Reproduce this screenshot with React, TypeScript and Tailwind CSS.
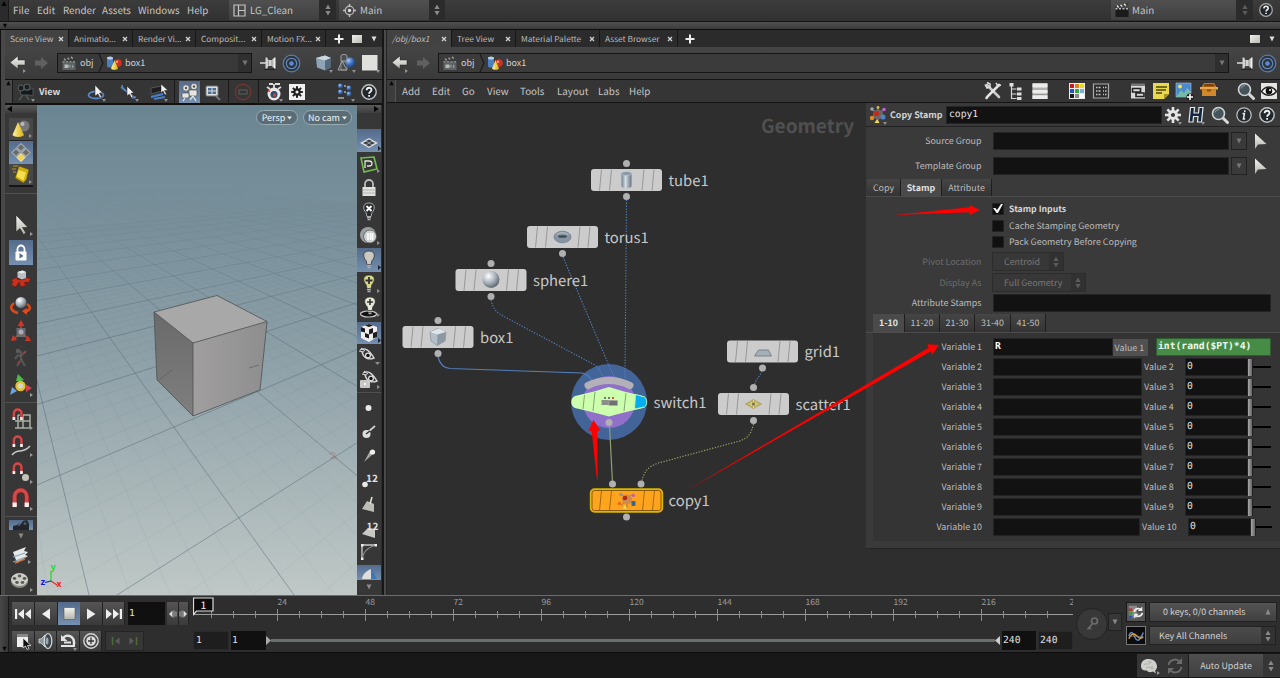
import React from "react";

type Kids = { children?: React.ReactNode };

function Ic({ c = "h-[20px] w-[20px]", v = "0 0 20 20", children }: { c?: string; v?: string } & Kids) {
  return (
    <svg className={"shrink-0 " + c} viewBox={v} fill="none">
      {children}
    </svg>
  );
}

const MONO = "font-['DejaVu_Sans_Mono',monospace] text-[9.700px]";

function Defs() {
  return (
    <svg className="absolute h-0 w-0">
      <defs>
        <linearGradient id="metal" x1="0" y1="0" x2="0" y2="1">
          <stop offset="0" stopColor="#f4f4f0" />
          <stop offset="1" stopColor="#b4b4ae" />
        </linearGradient>
        <radialGradient id="ball" cx="0.35" cy="0.3" r="0.8">
          <stop offset="0" stopColor="#ffffff" />
          <stop offset="0.5" stopColor="#a9b3bd" />
          <stop offset="1" stopColor="#4c555e" />
        </radialGradient>
        <radialGradient id="blueball" cx="0.35" cy="0.3" r="0.8">
          <stop offset="0" stopColor="#a9c8f2" />
          <stop offset="0.5" stopColor="#3e70b8" />
          <stop offset="1" stopColor="#1d3a70" />
        </radialGradient>
        <linearGradient id="tube" x1="0" y1="0" x2="1" y2="0">
          <stop offset="0" stopColor="#6f7d8a" />
          <stop offset="0.4" stopColor="#d4dde4" />
          <stop offset="1" stopColor="#66727e" />
        </linearGradient>
        <linearGradient id="gold" x1="0" y1="0" x2="1" y2="0">
          <stop offset="0" stopColor="#fff3a0" />
          <stop offset="1" stopColor="#d8b010" />
        </linearGradient>
      </defs>
    </svg>
  );
}

/* ---------- shared small icons ---------- */

const Tri = () => <path d="M15 17h4l-2 3z" fill="#8f8f8f" />;
const Side = () => <path d="M20 17v4l3-2z" fill="#8f8f8f" />;

const Back = ({ dim = false }: { dim?: boolean }) => (
  <Ic c="h-[20px] w-[18px]" v="0 0 18 20">
    {dim ? (
      <path d="M2 7.500h6V4l7 6-7 6v-3.500H2z" fill="#606060" />
    ) : (
      <>
        <path d="M16 7H9V3L1 9.500 9 16v-4h7z" fill="url(#metal)" stroke="#222" strokeWidth=".5" />
        <path d="M14 16v4l3-2z" fill="#8f8f8f" />
      </>
    )}
  </Ic>
);

const Clapper = ({ dark = false }: { dark?: boolean }) => (
  <Ic c="h-[16px] w-[16px]" v="0 0 16 16">
    <rect x="1.500" y="6.500" width="13" height="8.500" fill={dark ? "#1b1b1b" : "#5c6262"} />
    <path d="M0.500 4.200 14 .8l.6 2.200L1.200 6.300z" fill="#3a3a3a" />
    <path d="M3 3.600 4.600 5.400M6.500 2.700 8.200 4.500M10 1.900l1.800 1.700" stroke={dark ? "#ddd" : "#999"} strokeWidth="1.500" />
    <path d="M1.500 6.700h13" stroke={dark ? "#bbb" : "#888"} strokeWidth="1.400" strokeDasharray="2 1.500" />
    {!dark && (
      <>
        <rect x="3.500" y="9.500" width="4" height="3.500" fill="#b4baba" />
        <path d="m7.500 11 2-1.500v3.500zM11 9.500l2 2-2 2z" fill="#959b9b" />
      </>
    )}
  </Ic>
);

const Shapes = () => (
  <Ic c="h-[16px] w-[16px]" v="0 0 16 16">
    <path d="M1 3v8c0 2 6 2 6 0V3z" fill="#4b7fc0" />
    <ellipse cx="4" cy="3" rx="3" ry="1.500" fill="#b5d0ee" />
    <circle cx="12" cy="8" r="3.800" fill="#d03020" />
    <circle cx="11" cy="6.800" r="1.200" fill="#f09a8a" />
    <path d="M8.500 5 5 13.500c1 1.700 6 1.700 7 0z" fill="url(#gold)" />
  </Ic>
);

const Pin = () => (
  <Ic c="h-[18px] w-[18px]" v="0 0 18 18">
    <path d="M1 9h6" stroke="#ddd" strokeWidth="1.500" />
    <path d="M6.500 3.500h1.700l1 2.500H13l1-1.500h1.300V13.500H14L13 12H9.200l-1 2.500H6.500z" fill="#d2d2d2" />
    <path d="M15 3.500h1.500v11H15z" fill="#eee" />
    <path d="M9.500 6.500v5M13 6v6" stroke="#777" strokeWidth=".7" />
    <path d="M5 15.500h11" stroke="#222" />
  </Ic>
);

const Target = () => (
  <Ic c="h-[19px] w-[19px]" v="0 0 19 19">
    <circle cx="9.500" cy="9.500" r="8.300" stroke="#5d7ba8" strokeWidth="1.300" fill="#2b333d" />
    <circle cx="9.500" cy="9.500" r="5.200" stroke="#6484b2" strokeWidth="1.300" />
    <circle cx="9.500" cy="9.500" r="2.300" fill="#5a8ad8" />
  </Ic>
);

const Help = () => (
  <Ic>
    <circle cx="10" cy="10" r="7.200" fill="#20262b" stroke="#c2c6c6" strokeWidth="1.400" />
    <path d="M7.600 8.200c0-3.200 4.900-3.200 4.900-.3 0 1.900-2.400 1.800-2.400 3.800M10.100 13v1.700" stroke="#f2f2f2" strokeWidth="1.800" />
  </Ic>
);

const Info = () => (
  <Ic>
    <circle cx="10" cy="10" r="7.200" fill="#242a2e" stroke="#b8bcbc" strokeWidth="1.300" />
    <path d="M8.500 8.600h1.900l-1 5.400h1.800M10.800 5.300v1.700" stroke="#eee" strokeWidth="1.500" />
  </Ic>
);

const Mag = () => (
  <Ic>
    <path d="m12.500 12.500 5 5" stroke="#d8d8d8" strokeWidth="3" strokeLinecap="round" />
    <circle cx="8.500" cy="8.500" r="6" fill="#46545c" stroke="#d0d4d4" strokeWidth="1.600" />
    <path d="M5 7.500a4 4 0 0 1 4-3" stroke="#8fa0a8" />
  </Ic>
);

const Gear = ({ x = 10, y = 10, f = "#e4e4e4", hole = "#3a3a3a" }: { x?: number; y?: number; f?: string; hole?: string }) => (
  <g>
    {[0, 45, 90, 135].map((a) => (
      <rect key={a} x={x - 1.300} y={y - 8} width="2.600" height="16" fill={f} transform={`rotate(${a} ${x} ${y})`} />
    ))}
    <circle cx={x} cy={y} r="5" fill={f} />
    <circle cx={x} cy={y} r="2.100" fill={hole} />
  </g>
);

const Spin = ({ dim = false }: { dim?: boolean }) => (
  <Ic c="h-[14px] w-[8px]" v="0 0 8 14">
    <path d="M4 1.500 6.600 6H1.400zM4 12.500 6.600 8H1.400z" fill={dim ? "#5c5c5c" : "#8a8a8a"} />
  </Ic>
);

const Down = ({ f = "#8a8a8a" }: { f?: string }) => (
  <Ic c="h-[8px] w-[8px]" v="0 0 8 8">
    <path d="M1.500 1.500h5L4 6.500z" fill={f} />
  </Ic>
);

const Plus = () => (
  <Ic c="h-[10px] w-[10px]" v="0 0 10 10">
    <path d="M5 .5v9M.5 5h9" stroke="#eee" strokeWidth="2" />
  </Ic>
);

const Cross = () => (
  <Ic c="h-[6px] w-[6px]" v="0 0 6 6">
    <path d="m1 1 4 4M5 1 1 5" stroke="#d2d2d2" strokeWidth="1.300" />
  </Ic>
);

/* ---------- top bar ---------- */

function TopBar() {
  return (
    <div className="flex h-[22px] shrink-0 items-center border-b border-[#151515] bg-gradient-to-b from-[#3c3c3c] to-[#313131] pb-px text-[9.800px] leading-[20px] text-[#c6c6c6]">
      <div className="flex h-[21px] w-[9px] justify-center border-r border-[#1a1a1a] bg-[#2b2b2b] pt-px">
        <Ic c="h-[6px] w-[6px]" v="0 0 6 6"><path d="M3 0 5.500 5h-5z" fill="#050505" /></Ic>
      </div>
      <span className="ml-[4px] w-[24px]">File</span>
      <span className="w-[26px]">Edit</span>
      <span className="w-[39px]">Render</span>
      <span className="w-[36px]">Assets</span>
      <span className="w-[49px]">Windows</span>
      <span className="w-[42px]">Help</span>
      <div className="flex h-[20px] w-[90px] items-center bg-gradient-to-b from-[#505050] to-[#404040] pl-[4px]">
        <Ic c="h-[13px] w-[13px]" v="0 0 13 13">
          <path d="M1 1h11v11H1zM5.500 1v11M5.500 6.500H12" stroke="#c4c4c4" strokeWidth="1.200" />
        </Ic>
        <span className="ml-[4px]">LG_Clean</span>
      </div>
      <div className="flex h-[20px] w-[17px] items-center justify-center bg-[#2b2b2b]"><Spin /></div>
      <div className="ml-[3px] flex h-[20px] w-[90px] items-center bg-gradient-to-b from-[#505050] to-[#404040] pl-[4px]">
        <Ic c="h-[13px] w-[13px]" v="0 0 13 13">
          <circle cx="6.500" cy="6.500" r="4.300" stroke="#b4b4b4" strokeWidth="1.200" />
          <circle cx="6.500" cy="6.500" r="1.700" fill="#ddd" />
          <path d="M6.500 0v3M6.500 10v3M0 6.500h3M10 6.500h3" stroke="#c4c4c4" strokeWidth="1.400" />
        </Ic>
        <span className="ml-[4px]">Main</span>
      </div>
      <div className="flex h-[20px] w-[16px] items-center justify-center bg-[#2b2b2b]"><Spin /></div>
      <div className="ml-[666px] flex h-[20px] w-[125px] items-center bg-gradient-to-b from-[#505050] to-[#404040] pl-[3px]">
        <Clapper dark />
        <span className="ml-[2px]">Main</span>
      </div>
      <div className="flex h-[20px] w-[17px] items-center justify-center bg-[#2b2b2b]"><Spin dim /></div>
      <div className="ml-[4px] flex w-[18px] items-center justify-center">
        <Ic c="h-[14px] w-[14px]" v="2 2 16 16">
          <circle cx="10" cy="10" r="7.200" fill="#20262b" stroke="#a8abab" strokeWidth="1.400" />
          <path d="M7.600 8.200c0-3.200 4.900-3.200 4.900-.3 0 1.900-2.400 1.800-2.400 3.800M10.100 13v1.700" stroke="#eee" strokeWidth="1.900" />
        </Ic>
      </div>
    </div>
  );
}

/* ---------- pane tabs & path ---------- */

function Tab({ c, label, on = false }: { c: string; label: string; on?: boolean }) {
  return (
    <div
      className={
        "flex h-full shrink-0 items-center justify-between whitespace-nowrap border-r border-[#171717] pl-[5px] pr-[4px] " +
        (on ? "bg-[#424242] " : "bg-[#2b2b2b] ") +
        c
      }
    >
      <span>{label}</span>
      <Cross />
    </div>
  );
}

const Win = () => <div className="h-[8px] w-[10px] bg-gradient-to-br from-[#f0f0ec] to-[#bcbcb6]" />;

function PathContents() {
  return (
    <>
      <Clapper />
      <span className="ml-[3px] w-[18px]">obj</span>
      <Ic c="h-[18px] w-[6px]" v="0 0 6 18"><path d="M1 0l4 9-4 9" stroke="#1b1b1b" strokeWidth="1.200" /></Ic>
      <div className="ml-[2px] mr-[3px] flex"><Shapes /></div>
      <span>box1</span>
    </>
  );
}

/* ---------- scene view ---------- */

function Viewport() {
  const lines: React.ReactNode[] = [];
  const ax = 763, bx = -53, hy = 57, by = 490;
  const D = by - hy;
  for (let i = -60; i <= 10; i++) {
    const x = 80 + i * 68;
    const major = i % 5 === 0;
    const t = 3;
    lines.push(
      <path key={"a" + i} d={`M${ax} ${hy}L${ax + (x - ax) * t} ${hy + D * t}`} stroke="#566b78" strokeWidth={major ? 1 : 0.6} opacity={major ? 0.5 : 0.13} />
    );
  }
  for (let i = -4; i <= 90; i++) {
    const x = 52 + i * 41;
    const major = i % 5 === 0;
    lines.push(
      <path key={"b" + i} d={`M${bx} ${hy}L${bx + (x - bx) * 2} ${hy + D * 2}`} stroke="#566b78" strokeWidth={major ? 1 : 0.6} opacity={major ? 0.5 : 0.13} />
    );
  }
  return (
    <div className="relative h-full w-[320px] shrink-0 overflow-hidden bg-gradient-to-b from-[#6a8592] via-[#8c9fa7] to-[#bfc8c6]">
      <svg className="h-[490px] w-[320px]" viewBox="0 0 320 490" fill="none">
        <defs>
          <linearGradient id="fade" x1="0" y1="0" x2="0" y2="1">
            <stop offset="0.170" stopColor="#000" />
            <stop offset="0.450" stopColor="#fff" />
          </linearGradient>
          <mask id="fadeMask"><rect width="320" height="490" fill="url(#fade)" /></mask>
          <linearGradient id="faceL" x1="0" y1="0" x2="0" y2="1">
            <stop offset="0" stopColor="#6a6a6a" /><stop offset="1" stopColor="#7f7f7f" />
          </linearGradient>
          <linearGradient id="faceR" x1="0" y1="0" x2="1" y2="0">
            <stop offset="0" stopColor="#a09e9e" /><stop offset="1" stopColor="#8f8e8e" />
          </linearGradient>
        </defs>
        <g mask="url(#fadeMask)">{lines}</g>
        <path d="M117 207 180 190.500 230 216.500 156 238z" fill="#a9a8a8" />
        <path d="M117 207 156 238 156 311 120 275z" fill="url(#faceL)" />
        <path d="M156 238 230 216.500 223 285 156 311z" fill="url(#faceR)" />
        <path d="M117 207 180 190.500 230 216.500 223 285 156 311 120 275zM117 207l39 31 74-21.500M156 238v73" stroke="#4d5152" strokeWidth=".8" />
        <path d="M122 275l13-10M222 260l-10 3" stroke="#5d5d5d" strokeWidth=".7" />
        <path d="M292 350c2-3 7-3 6 0-1 2-3 2-4 3h6" stroke="#b06a66" strokeWidth="1" opacity=".6" />
        <path d="M14 476v-10" stroke="#18e018" strokeWidth="1.200" />
        <path d="m14 476 6 4" stroke="#f02020" strokeWidth="1.200" />
        <path d="m14 476-6 1.500" stroke="#1818e0" strokeWidth="1.200" />
        <text x="13.500" y="465" fontSize="9" fontWeight="700" fill="#12e012">y</text>
        <text x="19.500" y="481.500" fontSize="9" fontWeight="700" fill="#f01818">x</text>
        <text x="3.500" y="479.500" fontSize="9" fontWeight="700" fill="#1414e0">z</text>
      </svg>
      <div className="absolute right-[5px] top-[5px] flex gap-[5px] text-[9px] leading-[13px] text-[#eef2f2]">
        <div className="flex h-[15px] w-[42px] items-center justify-center rounded-full border border-[#9aaab1] bg-[#5a6d76]">Persp<span className="ml-[2px]"><Ic c="h-[4px] w-[5px]" v="0 0 5 4"><path d="M0 .5h5L2.500 3.500z" fill="#eee" /></Ic></span></div>
        <div className="flex h-[15px] w-[49px] items-center justify-center rounded-full border border-[#9aaab1] bg-[#5a6d76]">No cam<span className="ml-[2px]"><Ic c="h-[4px] w-[5px]" v="0 0 5 4"><path d="M0 .5h5L2.500 3.500z" fill="#eee" /></Ic></span></div>
      </div>
    </div>
  );
}

const SEL = "bg-gradient-to-b from-[#546b8c] to-[#7590b0]";

function Cell({ h, c = "", box = "", children }: { h: string; c?: string; box?: string } & Kids) {
  return (
    <div className={"flex w-full shrink-0 items-center justify-center " + h + " " + c}>
      <div className={"flex h-full w-[24px] items-center justify-center " + box}>
        <Ic c="h-[24px] w-[24px]" v="0 0 24 24">{children}</Ic>
      </div>
    </div>
  );
}

const Bulb = ({ f, s = "#333" }: { f: string; s?: string }) => (
  <>
    <path d="M12 3c-7 0-6 7-3 9.500l1 4h4l1-4C18 10 19 3 12 3z" fill={f} stroke={s} strokeWidth=".8" />
    <path d="M10 17.500h4M10.500 19.500h3" stroke="#b0b0b0" strokeWidth="1.400" />
  </>
);

const Magnet = ({ s = 1, x = 0, y = 0 }: { s?: number; x?: number; y?: number }) => (
  <g transform={`translate(${x} ${y}) scale(${s})`}>
    <path d="M5 20V9a6.500 6.500 0 0 1 13 0v11" stroke="#6b1d1d" strokeWidth="5.400" />
    <path d="M5 20V9a6.500 6.500 0 0 1 13 0v11" stroke="#cf4a4a" strokeWidth="4.200" />
    <path d="M5 20.500v-5M18 20.500v-5" stroke="#f2f2f2" strokeWidth="4.600" />
  </g>
);

const Sep = ({ c = "" }: { c?: string }) => <div className={"h-px w-full shrink-0 bg-[#505050] " + c} />;

function LeftTools() {
  return (
    <div className="flex w-[32px] shrink-0 flex-col overflow-hidden bg-[#373737]">
      <div className="flex h-[8px] w-full shrink-0 items-center bg-gradient-to-b from-[#5a5a5a] to-[#3e3e3e] pl-[2px]">
        <Ic c="h-[6px] w-[5px]" v="0 0 5 6"><path d="M5 0v6L0 3z" fill="#050505" /></Ic>
      </div>
      <Cell h="h-[23px]" c="mt-[5px]" box="bg-[#474747] border-b border-[#222]">
        <circle cx="15" cy="9" r="5.500" fill="#777" /><circle cx="13.500" cy="7" r="2" fill="#bbb" />
        <path d="M9 5 3.500 18c1.500 2.500 10 2.500 11.500 0z" fill="url(#gold)" /><Side />
      </Cell>
      <Cell h="h-[23px]" box={SEL}>
        <g stroke="#ccc" strokeWidth="1" fill="#6d6d68">
          <path d="m12 2.500 4 4-4 4-4-4z" /><path d="m7 7.500 4 4-4 4-4-4z" /><path d="m17 7.500 4 4-4 4-4-4z" />
          <path d="m12 12.500 4 4-4 4-4-4z" fill="#f4d24a" stroke="#fff6b8" />
        </g>
        <Side />
      </Cell>
      <Cell h="h-[23px]" box="bg-[#474747] border-b-2 border-[#151515]">
        <path d="M4 3h5M3 6h4M4 9h3" stroke="#a58a18" strokeWidth="2" opacity=".6" />
        <path d="M10 3l10 3.500-2.500 10-3 3.500-8.500-5z" fill="#cfae10" stroke="#5e4e08" strokeWidth=".6" />
        <path d="m9.500 7 7.500 2.500-2.500 8-7-4z" fill="#f5df50" /><Side />
      </Cell>
      <Sep c="mt-[6px]" />
      <Cell h="h-[26px]" c="mt-[18px]">
        <path d="M7 2v17l4-3.500 3.500 6 2.500-1.500-3.500-5.500H19z" fill="url(#metal)" stroke="#222" strokeWidth=".6" /><path d="M21 19v4l3-2z" fill="#999" />
      </Cell>
      <Cell h="h-[25px]" c="mt-[2px]" box={SEL}>
        <path d="M8.500 11V8a3.500 3.500 0 0 1 7 0v3" stroke="#fff" strokeWidth="1.800" />
        <rect x="6.500" y="10.500" width="11" height="9" rx=".8" fill="#fff" />
        <path d="M10.500 12v5.500l4-2.500z" fill="#4f6a90" />
      </Cell>
      <Cell h="h-[27px]">
        <path d="m2 13 6-3v2l4 1 4-1v-2l6 2-3 4-1-1-3 1 3 2-6 2-2-5-3 5-5-2 2-3z" fill="#c8301c" stroke="#5e140a" strokeWidth=".5" />
        <path d="m8.500 5 5-1.500L17 5v6l-4 1.500-4.500-2z" fill="#b9bfc4" /><path d="m8.500 5 4.500 1.500L17 5l-3.500-1.500z" fill="#e8ecee" />
      </Cell>
      <Cell h="h-[26px]">
        <path d="M5 10c-6 5-1 9 4 10M18 11c5 3 3 7-3 8" stroke="#d84a18" strokeWidth="2.600" /><path d="m18 15-5 3 5 4z" fill="#e04a20" />
        <circle cx="12" cy="9.500" r="5.500" fill="url(#ball)" />
      </Cell>
      <Cell h="h-[27px]">
        <path d="M12 12V5M12 13l-6 5M12 13l7 5" stroke="#c03020" strokeWidth="2" />
        <path d="M8.500 6 12 0l3.500 6zM2 21l2-6 4 5zM22 21l-6 0 3-5z" fill="#d43424" />
        <rect x="7.500" y="8" width="9" height="9" fill="#6d7478" opacity=".85" /><circle cx="12" cy="12" r="2.500" fill="#aab" />
      </Cell>
      <Cell h="h-[26px]">
        <path d="M12 5v9l-4 6M12 13l4 7M8 9l4 1 5-5M6 13l3-4" stroke="#555" strokeWidth="2.200" />
        <path d="m11 9 1 1M12 13l1 1M15 7l1-1M9 17l1-1" stroke="#a84444" strokeWidth="1.600" /><circle cx="9" cy="5" r="2.300" fill="#5b5b5b" />
      </Cell>
      <Cell h="h-[27px]">
        <circle cx="11.500" cy="13" r="4" fill="#d8d8c8" stroke="#e0c030" strokeWidth="2.400" />
        <path d="M7 8 9 1l6 6-3 1z" fill="#4fb846" /><path d="m16 11 7 4-6 4z" fill="#d84050" /><path d="m1 22 2-8 5 4z" fill="#6fa3dc" />
        <path d="M21 20v4l3-2z" fill="#999" />
      </Cell>
      <Sep c="mt-[4px]" />
      <Cell h="h-[27px]" c="mt-[2px]">
        <path d="M9 8h12v13H6M14 8v13M6 14h15M9 8v13" stroke="#a9b0a4" strokeWidth="1.500" /><Magnet s={0.58} x={2} y={1} /><path d="M21 19v4l3-2z" fill="#999" />
      </Cell>
      <Cell h="h-[27px]">
        <path d="M3 21c6-8 10 0 18-9" stroke="#c5c8c4" strokeWidth="1.500" /><Magnet s={0.58} x={2} y={1} /><path d="M21 19v4l3-2z" fill="#999" />
      </Cell>
      <Cell h="h-[27px]">
        <Magnet s={0.58} x={2} y={1} /><circle cx="16.500" cy="16.500" r="3.500" fill="#c4c4b8" /><path d="M21 19v4l3-2z" fill="#999" />
      </Cell>
      <Cell h="h-[27px]"><Magnet s={0.93} x={1} y={0} /><path d="M21 19v4l3-2z" fill="#999" /></Cell>
      <Sep c="mt-[3px]" />
      <Cell h="h-[10px]" c="mt-[3px] overflow-hidden" box={SEL}>
        <path d="M4 17v-4l8-2 2-3 4-1 2 4v6z" fill="#20262c" /><circle cx="10" cy="11.500" r="1.500" fill="#556" /><circle cx="16" cy="10.500" r="1.500" fill="#556" />
      </Cell>
      <div className="flex h-[12px] shrink-0 items-center justify-center"><Down /></div>
      <Cell h="h-[26px]">
        <path d="m4 9 13-5-2 4 4 1-3 3 3 1-11 7z" fill="#e8e8e4" /><path d="m4 14 12-4M4 19l13-5" stroke="#7da7c8" strokeWidth="1.200" />
        <path d="m6 20 10-4" stroke="#d0703a" strokeWidth="1.500" /><path d="M19 17v4l3-2z" fill="#999" />
      </Cell>
      <Cell h="h-[25px]">
        <ellipse cx="10.500" cy="12" rx="8.500" ry="7" fill="#85857e" /><ellipse cx="10.500" cy="10.500" rx="8.500" ry="6.500" fill="#cdcdc5" />
        <g fill="#5a5a56"><ellipse cx="10.500" cy="7" rx="1.800" ry="1.400" /><ellipse cx="5.500" cy="9.500" rx="1.800" ry="1.400" /><ellipse cx="15.500" cy="9.500" rx="1.800" ry="1.400" /><ellipse cx="8" cy="13.500" rx="1.800" ry="1.400" /><ellipse cx="13.500" cy="13.500" rx="1.800" ry="1.400" /></g>
        <path d="M21 19v4l3-2z" fill="#999" />
      </Cell>
    </div>
  );
}

function RightTools() {
  const eye = <><path d="M3 6c5-3 9 0 14 8-5 2-10 1-12-6" stroke="#d8d8d8" strokeWidth="1.400" /><path d="M4 4l4 3M2 7l5 1" stroke="#ddd" strokeWidth="1" /><circle cx="11" cy="11.500" r="3" fill="#ddd" /><circle cx="11" cy="11.500" r="1.700" fill="#111" /></>;
  return (
    <div className="flex w-[24px] shrink-0 flex-col overflow-hidden bg-[#373737]">
      <div className="flex h-[8px] w-full shrink-0 items-center justify-end bg-gradient-to-b from-[#5a5a5a] to-[#3e3e3e] pr-[2px]">
        <Ic c="h-[6px] w-[5px]" v="0 0 5 6"><path d="M0 0v6l5-3z" fill="#050505" /></Ic>
      </div>
      <Cell h="h-[23px]" c="mt-[16px]" box={SEL}>
        <path d="m3 14 9-5 9 5-9 5z" fill="#ddd" /><path d="m6 14 3-1.500 3 1.500-3 1.500zM12 14l3-1.500 3 1.500-3 1.500zM9 12l3-1.500 3 1.500-3 1.500zM9 16l3-1.500 3 1.500-3 1.500z" fill="#39424c" /><path d="M21 17v5l3-2.500z" fill="#222" />
      </Cell>
      <Cell h="h-[24px]">
        <path d="m4 6 13-1 3 12-13 3z" stroke="#6fc04a" strokeWidth="1.600" /><path d="M8 16V9h4c4 0 4 5 0 5H10" stroke="#dde8d8" strokeWidth="1.300" /><Side />
      </Cell>
      <Cell h="h-[24px]">
        <path d="M8 11V8a4 4 0 0 1 8 0v3" stroke="#bbb" strokeWidth="1.800" /><rect x="5.500" y="11" width="13" height="9" fill="#e2e2dc" /><path d="M5.500 14h13M5.500 17h13" stroke="#aaa" strokeWidth=".8" />
      </Cell>
      <Cell h="h-[24px]">
        <Bulb f="#272c2e" s="#c8c8c8" /><path d="m9.500 6 5 5M14.500 6l-5 5" stroke="#fff" strokeWidth="1.800" />
      </Cell>
      <Cell h="h-[24px]">
        <circle cx="11" cy="11" r="8" fill="#9aa0a0" /><circle cx="13" cy="12.500" r="6.500" fill="#cfd2d0" stroke="#555" strokeWidth=".8" /><path d="M11 9v7M13.500 9v7M15.500 9v7" stroke="#fff" strokeWidth="1.500" /><Side />
      </Cell>
      <Cell h="h-[24px]" box={SEL}><Bulb f="#c9c9c0" /><path d="M21 17v5l3-2.500z" fill="#222" /></Cell>
      <Cell h="h-[24px]"><Bulb f="#d9d98a" /><path d="M12 5v7M8.500 8.500h7" stroke="#333" strokeWidth="1.800" /><Side /></Cell>
      <Cell h="h-[24px]"><ellipse cx="11.500" cy="18" rx="8" ry="3" fill="#111" stroke="#ccc" strokeWidth="1.200" /><g transform="translate(1 -2)"><Bulb f="#e8ead8" /><path d="M12 5v6M9 8h6" stroke="#333" strokeWidth="1.600" /></g><Side /></Cell>
      <Cell h="h-[22px]" c="mt-[2px]" box={SEL}>
        <path d="m4 6 8-3 8 3v10l-8 5-8-4z" fill="#eee" /><path d="m8 4.500 4 1.500 4-1.500L12 3zM4 6l4 1.500v4l-4-1zM12 8.500 16 7v5l-4 1.500zM8 12l4 1.500v4L8 16zM16 12l4-1.500V16l-4 1.500z" fill="#1c1c1c" /><path d="M21 17v5l3-2.500z" fill="#222" />
      </Cell>
      <Cell h="h-[24px]">{eye}<path d="M18 18h5l-2.500 3z" fill="#8f8f8f" /></Cell>
      <Cell h="h-[24px]"><g transform="translate(3 -1)">{eye}</g><rect x="3" y="12" width="10" height="8" rx="1" fill="#c8c8c4" /><path d="M6.500 13.500v5l4-2.500z" fill="#fff" stroke="#888" strokeWidth=".4" /><Side /></Cell>
      <Sep />
      <Cell h="h-[24px]" c="mt-[3px]"><circle cx="11.500" cy="12" r="3" fill="#e8e8e4" /></Cell>
      <Cell h="h-[24px]"><path d="m11 12 7-6" stroke="#ccc" strokeWidth="1.800" /><circle cx="9.500" cy="14" r="4" fill="#ddd" /><path d="m9 14 4-3" stroke="#333" strokeWidth="1.500" /></Cell>
      <Cell h="h-[24px]"><path d="M7 18 13 7l3 3z" fill="#a8a8a4" /><circle cx="15.500" cy="8" r="2.600" fill="#f0f0ec" /></Cell>
      <Cell h="h-[24px]"><text x="9" y="14" fontSize="10" fontWeight="700" fill="#e2e2e2">12</text><circle cx="8" cy="16.500" r="2.800" fill="#e8e8e4" /></Cell>
      <Cell h="h-[24px]"><path d="m5 17 5-8 7 3 0 8z" fill="#bdbdb8" /><path d="M15 5l-2 7" stroke="#ddd" strokeWidth="1.600" /></Cell>
      <Cell h="h-[24px]"><path d="m5 18 6-6 7 1v9z" fill="#c8c8c4" /><text x="9.500" y="13.500" fontSize="10" fontWeight="700" fill="#e2e2e2">12</text></Cell>
      <Cell h="h-[24px]"><path d="M5 5h14M5 5v14" stroke="#ccc" strokeWidth="1.300" /><path d="M5 19C7 11 10 8 19 5" stroke="#888" strokeWidth="1.200" /><path d="M4 4h2.500v2.500H4zM17.500 4H20v2.500h-2.500zM4 17.500h2.500V20H4z" fill="#eee" /></Cell>
      <Cell h="h-[15px]" c="mt-px overflow-hidden" box={SEL}><path d="M5 18c1-6 5-8 9-10l1 10z" fill="#dededa" /><path d="m14 6 6 12h-6z" fill="#3f76b8" /></Cell>
      <div className="flex h-[14px] shrink-0 items-center justify-center"><Down /></div>
    </div>
  );
}

function ScenePane() {
  const vs = <div className="h-[24px] w-px shrink-0 bg-[#1b1b1b]" />;
  return (
    <div className="flex w-[377px] shrink-0 flex-col">
      <div className="flex h-[17px] shrink-0 items-center bg-[#2b2b2b] text-[8.300px] leading-[16px] text-[#bdbdbd]">
        <Tab c="w-[64px]" label="Scene View" on />
        <Tab c="w-[64px]" label="Animatio..." />
        <Tab c="w-[63px]" label="Render Vi..." />
        <Tab c="w-[66px]" label="Composit..." />
        <Tab c="w-[64px]" label="Motion FX..." />
        <div className="ml-[8px]"><Plus /></div>
        <div className="ml-[8px]"><Win /></div>
        <div className="ml-[8px]"><Down f="#ddd" /></div>
      </div>
      <div className="flex h-[32px] shrink-0 items-center bg-gradient-to-b from-[#454545] to-[#3a3a3a] text-[9px] leading-[18px] text-[#d2d2d2]">
        <div className="ml-[4px] flex w-[24px]"><Back /></div>
        <div className="flex w-[23px]"><Back dim /></div>
        <div className="ml-[1px] flex h-[20px] w-[195px] items-center border border-[#161616] bg-[#393939] pl-[3px]">
          <PathContents />
          <div className="ml-auto flex h-full w-[13px] items-center justify-center bg-[#2f2f2f]"><Down f="#777" /></div>
        </div>
        <div className="ml-[7px] flex"><Pin /></div>
        <div className="ml-[5px] flex"><Target /></div>
        <div className="ml-[13px] flex">
          <Ic><path d="m2 5 9-2.500L17 5v9l-6 3.500-8-3z" fill="#8ea3b5" /><path d="m2 5 9-2.500L17 5l-6 2.500z" fill="#cbd8e2" /><path d="M11 7.500 17 5v9l-6 3.500z" fill="#55697b" /><Tri /></Ic>
        </div>
        <div className="ml-[3px] flex">
          <Ic><path d="M4 3c0-2 6-2 6 0v5H4zM1 17l4-9 5 9z" fill="#4c4c4c" stroke="#aaa" strokeWidth=".9" /><path d="M4 9h6v8H4z" stroke="#999" strokeWidth=".8" /><circle cx="13" cy="9.500" r="5" fill="url(#blueball)" /><Tri /></Ic>
        </div>
        <div className="ml-[2px] flex"><Ic c="h-[20px] w-[22px]" v="0 0 22 20"><path d="M3 2h15.500v15.500H3z" fill="#e0e0dc" /><path d="M17 17h4l-2 3z" fill="#999" /></Ic></div>
      </div>
      <div className="flex h-[26px] shrink-0 items-center border-b-2 border-t border-[#101010] bg-[#353535]">
        <div className="flex h-full w-[8px] justify-center border-r border-[#1a1a1a] bg-[#484848] pt-px"><Ic c="h-[5px] w-[5px]" v="0 0 6 6"><path d="M3 0 5.500 5h-5z" fill="#050505" /></Ic></div>
        <div className="ml-[3px] flex"><Ic><path d="M4 8h9l4-2v8l-4-1H5z" fill="#15191b" stroke="#4d5356" /><circle cx="5" cy="6" r="3" fill="#1a1f22" stroke="#5a6164" /><circle cx="11" cy="5" r="3" fill="#1a1f22" stroke="#5a6164" /><path d="M7 13l-4 5M10 13l3 5" stroke="#50585a" strokeWidth="1.500" /><Tri /></Ic></div>
        <span className="ml-[3px] w-[20px] text-[9px] font-bold leading-[20px] text-[#dcdcdc]">View</span>
        <div className="ml-[28px] flex"><Ic><ellipse cx="9" cy="13" rx="7.500" ry="3.500" stroke="#5a86c4" strokeWidth="1.800" /><path d="M8 3v11l3-2 2 4 1.500-1-2-4h3z" fill="#f2f2f2" stroke="#222" strokeWidth=".5" /><Tri /></Ic></div>
        <div className="ml-[13px] flex"><Ic><path d="m1 5 14 11" stroke="#5a86c4" strokeWidth="1.800" /><path d="M2 3l1 4M12 16l4-1" stroke="#5a86c4" strokeWidth="1.400" /><path d="M7 4v10l2.500-2 2 4 1.500-1-2-4h3z" fill="#f2f2f2" stroke="#222" strokeWidth=".5" /><Tri /></Ic></div>
        <div className="ml-[9px] flex"><Ic><path d="m2 6 11-2v5L2 12z" fill="#1d1d1d" stroke="#555" /><path d="m2 15 12-3M5 17l11-2" stroke="#4a80c8" strokeWidth="2" /><path d="M12 2v9l2-2 2 4 1.500-1-2-3.500H19z" fill="#f2f2f2" stroke="#222" strokeWidth=".5" /><Tri /></Ic></div>
        <div className="ml-[5px] flex">{vs}</div>
        <div className={"ml-[4px] flex h-[22px] w-[21px] items-center justify-center " + SEL}>
          <Ic><g fill="#e4e4e0" stroke="#444" strokeWidth=".6"><circle cx="6" cy="6" r="3.200" /><circle cx="14" cy="4.500" r="3.200" /><rect x="9" y="8" width="8" height="6" rx="1" /><rect x="2" y="11" width="7" height="5" rx="1" /></g><circle cx="6" cy="6" r="1.200" fill="#555" /><circle cx="14" cy="4.500" r="1.200" fill="#555" /><path d="M5 16l-2 3M13 14l3 5M13 14l-3 4" stroke="#e4e4e0" strokeWidth="1.300" /></Ic>
        </div>
        <div className="ml-[3px] flex"><Ic><rect x="3" y="4" width="12" height="10" rx="1" fill="#ddd" stroke="#777" /><path d="M5 6h8v6H5z" fill="#4d6d96" /><path d="M5 9h8M9 6v6" stroke="#ddd" /><path d="m13 14 4 4" stroke="#777" strokeWidth="2" /></Ic></div>
        <div className="ml-[5px] flex">{vs}</div>
        <div className="ml-[4px] flex"><Ic><circle cx="10" cy="10" r="7.800" stroke="#6e3434" strokeWidth="1.600" /><rect x="6" y="8" width="8" height="4" stroke="#555" strokeWidth="1.300" /></Ic></div>
        <div className="ml-[5px] flex">{vs}</div>
        <div className="ml-[5px] flex"><Ic><path d="M5 2h4M11 2h5M10 2v4M3 5l3 2M17 5l-3 2" stroke="#ddd" strokeWidth="1.800" /><circle cx="10" cy="12" r="6.500" fill="#e8e8e8" /><circle cx="10" cy="12.500" r="3.500" fill="#2d4b6d" /><circle cx="10.500" cy="13" r="1.700" fill="#d04030" /><path d="M4 8.500l2 1" stroke="#c44" strokeWidth="1.600" /><Tri /></Ic></div>
        <div className="ml-[3px] flex"><Ic><path d="M2 2h16v16H2z" fill="#f0f0ee" /><g transform="translate(2.700 2.700) scale(.73)"><Gear f="#1d1d1d" hole="#f0f0ee" /></g></Ic></div>
        <div className="ml-[29px] flex"><Ic><g fill="url(#blueball)"><circle cx="4.500" cy="4" r="2.500" /><circle cx="13" cy="6" r="2.500" /><circle cx="4.500" cy="10" r="2.500" /><circle cx="13" cy="12" r="2.500" /></g><path d="M2 16h6M8 10h2M8 4h2" stroke="#aaa" strokeWidth="1.400" /><Tri /></Ic></div>
        <div className="ml-[3px] flex"><Help /></div>
      </div>
      <div className="flex min-h-0 flex-1">
        <LeftTools />
        <Viewport />
        <RightTools />
      </div>
    </div>
  );
}

/* ---------- network ---------- */

function NodeBox({ x, y, name, top = true, bot = true, topX = 0, botX = 0, children }: { x: number; y: number; name: string; top?: boolean; bot?: boolean; topX?: number; botX?: number } & Kids) {
  return (
    <g transform={`translate(${x} ${y})`}>
      <rect x="-35.500" y="-11" width="71" height="22" rx="3" fill="#cccccc" />
      <path d="M-27 10.500-25-10.500M-17 10.500-15-10.500M15.500 10.500 17.500-10.500M25.500 10.500 27.500-10.500" stroke="#8a8a8a" strokeWidth=".8" />
      {top && <circle cx={topX} cy="-16.500" r="3.500" fill="#b0b0b0" />}
      {bot && <circle cx={botX} cy="16.500" r="3.500" fill="#b0b0b0" />}
      {children}
      <text x="42" y="5.500" fontSize="14.800" fill="#c8c8c8">{name}</text>
    </g>
  );
}

function Network() {
  return (
    <div className="w-[479px] shrink-0 overflow-hidden bg-[#2e2e2e]">
      <svg className="h-[492px] w-[479px]" viewBox="387 103 479 492" fill="none">
        <text x="761" y="132.500" fontSize="19" fontWeight="700" fill="#505050">Geometry</text>
        <circle cx="609" cy="402" r="38" fill="#436499" />
        <circle cx="609" cy="402" r="26" fill="#9070c8" />
        <g stroke="#5480bd" strokeWidth="1.100">
          <path d="M438 357c2 8 6 11 12 11.500L582 373c5 1 8 4 10 8" />
          <g strokeDasharray="1.300 1.500">
            <path d="M491 300c2 9 5 12 12 16l90 48c6 3 8 8 10 14" />
            <path d="M563 257 607 361l8 18" />
            <path d="M626.500 200 625 378" />
            <path d="M762 371c-3 7-6 8-8 15" />
          </g>
        </g>
        <path d="M609.500 425 612.500 483" stroke="#8f9f74" strokeWidth="1.200" />
        <path d="M753.500 424c-2 9-5 14-14 17l-81 22c-12 4-15 10-17 20" stroke="#8f9f64" strokeWidth="1.200" strokeDasharray="1.300 1.500" />
        <NodeBox x={626.5} y={180} name="tube1">
          <path d="M-5-6.500V6c0 3 10 3 10 0V-6.500z" fill="url(#tube)" /><ellipse cy="-6.500" rx="5" ry="2" fill="#8898a6" stroke="#c6d0d8" strokeWidth=".6" />
        </NodeBox>
        <NodeBox x={562.5} y={237} name="torus1" top={false}>
          <ellipse rx="8.500" ry="5.800" fill="#8795a2" stroke="#6c7986" strokeWidth=".7" /><ellipse cy="-.5" rx="4.500" ry="1.300" fill="#3e4953" /><path d="M-6-2c3-3 9-3 12 0" stroke="#bcc8d2" />
        </NodeBox>
        <NodeBox x={491} y={280} name="sphere1"><circle cy="-.5" r="8.500" fill="url(#ball)" /></NodeBox>
        <NodeBox x={438} y={337} name="box1">
          <path d="m-8-5 8-3.500L8-5 7 4-1 8.500-7 4z" fill="#b4bec6" stroke="#7c8790" strokeWidth=".6" /><path d="m-8-5 7.500 2.500L8-5 1-8.500z" fill="#dfe6ea" /><path d="M-.5-2.500 8-5 7 4-1 8.500z" fill="#8c98a2" />
        </NodeBox>
        <NodeBox x={762.5} y={351.5} name="grid1" top={false}><path d="M-4-1.500H6L9 4.500H-8z" fill="#a4afb8" stroke="#6b7680" strokeWidth=".8" /></NodeBox>
        <NodeBox x={753.5} y={404} name="scatter1"><path d="M-9 0 0-5 9 0 0 5z" fill="#b5a860" /><path d="M-5 0H5M0-4V4M-3-2 3 2M3-2-3 2" stroke="#e6dc9a" /><circle r="1.500" fill="#77703c" /></NodeBox>
        <path d="M588 385.500c8-4 14-5 21-5s13 1 21 5" stroke="#b4b0b8" strokeWidth="7" strokeLinecap="round" />
        <path d="M609 387 594 391.500 575 396c-5 2-5 10 0 12l19 4.500 15 4 15-4 19-4.500c5-2 5-10 0-12l-19-4.500z" fill="#ccffae" />
        <path d="M635.500 394.500l9 2.500c3 2 3 8 0 10l-10 2z" fill="#00aeef" stroke="#ccffae" strokeWidth=".8" />
        <path d="M583 409l1.500-14M593 411l2-19M624 411l2-18" stroke="#6f8f60" strokeWidth=".8" />
        <path d="M601.500 400h12v5h-12z" fill="#8a8f8a" /><rect x="609" y="400.500" width="8.500" height="5" fill="#6d726d" stroke="#a9aea9" strokeWidth=".7" />
        <path d="M604 398h2M608 398h2" stroke="#555" strokeWidth="1.600" /><path d="M612 398h2" stroke="#d06030" strokeWidth="1.800" />
        <circle cx="609" cy="422.500" r="3.500" fill="#b0b0b0" />
        <text x="653.500" y="407.500" fontSize="14.800" fill="#c8c8c8">switch1</text>
        <g>
          <rect x="590.500" y="489" width="72" height="23" rx="4" fill="#ffa41c" stroke="#d8b800" strokeWidth="1.400" />
          <rect x="592" y="490.500" width="69" height="20" rx="2.500" stroke="#6e4a00" strokeWidth=".8" />
          <path d="M599.500 510.500 601.500 490.500M609.500 510.500l2-20M642.500 510.500l2-20M652.500 510.500l2-20" stroke="#8a5a10" strokeWidth=".8" />
          <path d="M621 494l6 5 6-5M621 506l6-7 7 5M627 499v9" stroke="#9a7a50" />
          <circle cx="627" cy="499.500" r="5" fill="#d08a50" /><circle cx="625" cy="498" r="2.300" fill="#b02a18" />
          <circle cx="621" cy="494.500" r="1.800" fill="#909890" /><circle cx="633.500" cy="495.500" r="1.600" fill="#c05ac0" /><rect x="631.500" y="501" width="4" height="5" rx="1" fill="#3f648c" /><path d="m625 505 2 3.500h-4z" fill="#f2e05a" /><circle cx="619.500" cy="503.500" r="1.700" fill="#e06a18" />
          <circle cx="612.500" cy="484" r="3.500" fill="#b0b0b0" /><circle cx="641" cy="484" r="3.500" fill="#b0b0b0" /><circle cx="626.500" cy="517" r="3.500" fill="#b0b0b0" />
          <text x="668.500" y="505.500" fontSize="14.800" fill="#c8c8c8">copy1</text>
        </g>
      </svg>
    </div>
  );
}

/* ---------- parameters ---------- */

const FIELD = "border border-[#242424] bg-[#121212] ";
const LABEL = "w-[115.500px] shrink-0 text-right whitespace-nowrap ";

function GroupRow({ label, c = "" }: { label: string; c?: string }) {
  return (
    <div className={"flex h-[18px] shrink-0 items-center " + c}>
      <span className={LABEL}>{label}</span>
      <div className={FIELD + "ml-[11.500px] h-[18px] w-[236px]"} />
      <div className="ml-[2px] flex h-[18px] w-[16px] items-center justify-center border border-[#222] bg-[#3a3a3a]"><Down f="#777" /></div>
      <div className="ml-[7px] flex"><Ic c="h-[17px] w-[13px]" v="0 0 13 17"><path d="M1 .5v15.500l3-4.500 8.500-.5z" fill="url(#metal)" /></Ic></div>
    </div>
  );
}

function Check({ label, on = false, c }: { label: string; on?: boolean; c: string }) {
  return (
    <div className={"flex h-[12px] shrink-0 items-center pl-[126px] " + c}>
      <div className="flex h-[12px] w-[12px] items-center justify-center border border-[#222] bg-[#101010]">
        {on && <Ic c="h-[10px] w-[10px]" v="0 0 10 10"><path d="M0 4h2.500l1.500 2L8 0h2L5 9H3.500z" fill="#f2f2f2" /></Ic>}
      </div>
      <span className={"ml-[5px] whitespace-nowrap " + (on ? "text-[8.700px] font-bold text-[#d8d8d8]" : "")}>{label}</span>
    </div>
  );
}

function ComboRow({ label, value, w, c }: { label: string; value: string; w: string; c: string }) {
  return (
    <div className={"flex h-[19px] shrink-0 items-center text-[#6c6c6c] " + c}>
      <span className={LABEL}>{label}</span>
      <div className={"ml-[10.500px] flex h-[19px] items-center border border-[#2c2c2c] bg-[#373737] " + w}>
        <span className="flex-1 whitespace-nowrap pl-[11px] text-[#777]">{value}</span>
        <div className="flex h-full w-[14px] items-center justify-center bg-[#313131]"><Spin dim /></div>
      </div>
    </div>
  );
}

function PTab({ label, on = false, w }: { label: string; on?: boolean; w: string }) {
  return (
    <div className={"flex h-full items-center justify-center border-r border-[#1e1e1e] " + (on ? "bg-[#4a4a4a] font-bold text-[#e0e0e0] " : "bg-gradient-to-b from-[#454545] to-[#343434] ") + w}>
      {label}
    </div>
  );
}

function VarRow({ n }: { n: number }) {
  const last = n === 10;
  return (
    <div className="flex h-[20px] shrink-0 items-center">
      <span className="w-[109px] shrink-0 whitespace-nowrap text-right">Variable {n}</span>
      <div className={FIELD + "ml-[11px] h-[18px] " + (last ? "w-[147px]" : "w-[149px]")} />
      <span className={"ml-[2px] whitespace-nowrap " + (last ? "w-[46px]" : "w-[41px]")}>Value {n}</span>
      <div className={FIELD + "h-[18px] w-[63px] pl-[1px] leading-[16px] text-[#e0e0e0] " + MONO}>0</div>
      <div className="h-[17px] w-[5px] border-r border-[#222] bg-gradient-to-r from-[#a8a8a8] to-[#666]" />
      <div className={"h-[2px] bg-black " + (last ? "w-[16px]" : "w-[18px]")} />
    </div>
  );
}

function Params() {
  return (
    <div className="flex w-[414px] shrink-0 flex-col">
      <div className="flex h-[446px] shrink-0 flex-col border-b border-[#242424] bg-[#3a3a3a] text-[8.900px] leading-[14px] text-[#bcbcbc]">
        <div className="flex h-[24px] shrink-0 items-center border-b border-[#232323]">
          <div className="ml-[2px] flex"><Ic>
            <path d="M4 4l6 6 6-6M4 14l6-4 6 4M10 3v14" stroke="#777" strokeWidth="1.400" /><circle cx="10" cy="9.500" r="5" fill="#6e6464" /><circle cx="8.500" cy="8.500" r="2.600" fill="#c42a18" />
            <circle cx="4" cy="4" r="1.800" fill="#9aa6b0" /><circle cx="16" cy="4.500" r="1.800" fill="#c060d0" /><circle cx="4" cy="13" r="2.200" fill="#e08a28" /><circle cx="15" cy="12" r="2.500" fill="#4a86c4" /><circle cx="10" cy="2.500" r="1.400" fill="#d8c040" /><path d="m9 14 2.500 4h-5z" fill="#f0de50" /><Tri />
          </Ic></div>
          <span className="ml-[2px] w-[55px] whitespace-nowrap font-bold text-[#d4d4d4]">Copy Stamp</span>
          <div className={FIELD + "ml-[1px] h-[18px] w-[216px] pl-[2px] leading-[16px] text-[#e4e4e4] " + MONO}>copy1</div>
          <div className="ml-[1px] flex"><Ic><Gear /><Tri /></Ic></div>
          <div className="ml-[3px] flex"><Ic><path d="M4.500 2.500h4L8 8h4.500l.5-5.500h4L15.500 17h-4l.5-5.500H7.500L7 17H3z" fill="#10263f" stroke="#e6e6e6" strokeWidth="1.200" /><Tri /></Ic></div>
          <div className="ml-[4px] flex"><Mag /></div>
          <div className="ml-[4px] flex"><Info /></div>
          <div className="ml-[3px] flex"><Help /></div>
        </div>
        <GroupRow label="Source Group" c="mt-[5px]" />
        <GroupRow label="Template Group" c="mt-[7px]" />
        <div className="mt-[4px] flex h-[18px] shrink-0 border-b border-[#4c4c4c] pl-[1px]">
          <PTab label="Copy" w="w-[34px]" />
          <PTab label="Stamp" on w="w-[41px]" />
          <PTab label="Attribute" w="w-[50px]" />
        </div>
        <Check label="Stamp Inputs" on c="mt-[6px]" />
        <Check label="Cache Stamping Geometry" c="mt-[5px]" />
        <Check label="Pack Geometry Before Copying" c="mt-[4px]" />
        <ComboRow label="Pivot Location" value="Centroid" w="w-[72px]" c="mt-[4px]" />
        <ComboRow label="Display As" value="Full Geometry" w="w-[94px]" c="mt-[2px]" />
        <div className="mt-[2px] flex h-[18px] shrink-0 items-center">
          <span className={LABEL}>Attribute Stamps</span>
          <div className={FIELD + "ml-[11.500px] h-[18px] w-[278px]"} />
        </div>
        <div className="mt-[2px] flex h-[19px] shrink-0 border-b border-[#4c4c4c] pl-[7px]">
          <PTab label="1-10" on w="w-[32px]" />
          <PTab label="11-20" w="w-[35px]" />
          <PTab label="21-30" w="w-[35px]" />
          <PTab label="31-40" w="w-[36px]" />
          <PTab label="41-50" w="w-[35px]" />
        </div>
        <div className="ml-[7px] flex h-[208px] shrink-0 flex-col bg-[#343434] pt-[4px]">
          <div className="flex h-[20px] shrink-0 items-center">
            <span className="w-[109px] shrink-0 text-right">Variable 1</span>
            <div className={FIELD + "ml-[11px] h-[18px] w-[120px] pl-[1px] font-bold leading-[16px] text-white " + MONO}>R</div>
            <span className="h-[17px] w-[35px] whitespace-nowrap bg-[#505050] pl-[1.500px] leading-[17px]">Value 1</span>
            <div className={"ml-[8px] h-[18px] w-[115px] border border-[#2d5c2d] bg-[#468c46] pl-[1px] font-bold leading-[16px] text-[#eefaee] " + MONO}>int(rand($PT)*4)</div>
          </div>
          {[2, 3, 4, 5, 6, 7, 8, 9, 10].map((n) => <VarRow key={n} n={n} />)}
        </div>
      </div>
      <div className="flex-1 bg-[#2e2e2e]" />
    </div>
  );
}

function NetworkPane() {
  return (
    <div className="flex w-[893px] shrink-0 flex-col">
      <div className="flex h-[17px] shrink-0 items-center bg-[#2b2b2b] text-[8.300px] leading-[16px] text-[#bdbdbd]">
        <Tab c="w-[65px] italic" label="/obj/box1" on />
        <Tab c="w-[64px]" label="Tree View" />
        <Tab c="w-[84px]" label="Material Palette" />
        <Tab c="w-[78px]" label="Asset Browser" />
        <div className="ml-[7px]"><Plus /></div>
        <div className="ml-auto"><Win /></div>
        <div className="ml-[8px] mr-[4px]"><Down f="#ddd" /></div>
      </div>
      <div className="flex h-[32px] shrink-0 items-center bg-gradient-to-b from-[#454545] to-[#3a3a3a] text-[9px] leading-[18px] text-[#d2d2d2]">
        <div className="ml-[4px] flex w-[24px]"><Back /></div>
        <div className="flex w-[23px]"><Back dim /></div>
        <div className="flex h-[20px] w-[791px] items-center border border-[#161616] bg-[#3b3b3b] pl-[3px]">
          <PathContents />
          <div className="ml-auto flex h-full w-[13px] items-center justify-center bg-[#2f2f2f]"><Down f="#777" /></div>
        </div>
        <div className="ml-[7px] flex"><Pin /></div>
        <div className="ml-[4px] flex"><Target /></div>
      </div>
      <div className="flex h-[24px] shrink-0 items-center border-b border-t border-[#141414] bg-[#353535] text-[9.800px] leading-[20px] text-[#c6c6c6]">
        <div className="flex h-full w-[9px] justify-center border-r border-[#555] bg-[#3c3c3c] pt-px"><Ic c="h-[5px] w-[5px]" v="0 0 6 6"><path d="M3 0 5.500 5h-5z" fill="#050505" /></Ic></div>
        <span className="ml-[6px] w-[30px]">Add</span>
        <span className="w-[30px]">Edit</span>
        <span className="w-[25px]">Go</span>
        <span className="w-[33px]">View</span>
        <span className="w-[37px]">Tools</span>
        <span className="w-[41px]">Layout</span>
        <span className="w-[31px]">Labs</span>
        <span className="w-[30px]">Help</span>
        <div className="ml-[324px] flex"><Ic><path d="m4 4 12 12" stroke="#ccc" strokeWidth="2.600" strokeLinecap="round" /><path d="M16 4 5 15l-1.500 2" stroke="#e4e4e4" strokeWidth="2.600" strokeLinecap="round" /><path d="M2 3.500 4 7l3-1V3L4 1.500M13 2l2 3 3-1" stroke="#ddd" strokeWidth="1.500" /></Ic></div>
        <div className="ml-[3px] flex"><Ic><path d="M5.500 4v13.500h5M5.500 8h5M5.500 13h5" stroke="#d8d8d8" strokeWidth="1.200" /><path d="M3.500 2h4v3.500h-4zM11 6.500h4.500v3H11zM11 11.500h4.500v3H11zM11 16h4.500v3H11z" fill="#dedede" /></Ic></div>
        <div className="ml-[4px] flex"><Ic><path d="M2.500 2h15v16h-15z" fill="#c9c9c5" /><path d="M2.500 3h15v3.300h-15zM2.500 9h15v3h-15zM2.500 14.500h15V18h-15z" fill="#ececea" /><path d="M2.500 8h15M2.500 13.500h15" stroke="#999" /></Ic></div>
        <div className="ml-[17px] flex"><Ic>
          <path d="M2 2h16v16H2z" fill="#eee" />
          <path d="M3 3h4v4H3z" fill="#c02020" /><path d="M8 3h4v4H8z" fill="#e08020" /><path d="M13 3h4v4h-4z" fill="#e8d820" />
          <path d="M3 8h4v4H3z" fill="#2850c0" /><path d="M8 8h4v4H8z" fill="#38a838" /><path d="M13 8h4v4h-4z" fill="#80b0d8" />
          <path d="M3 13h4v4H3z" fill="#181818" /><path d="M8 13h4v4H8z" fill="#888" /><path d="M13 13h4v4h-4z" fill="#fff" />
        </Ic></div>
        <div className="ml-[4px] flex"><Ic><path d="M2.500 3h15v14h-15z" fill="#2c2c2c" stroke="#aaa" strokeWidth="1.200" /><path d="M5 6.500h1.500M7.500 6.500h2M12 6.500h1M14 6.500h1.500M5 10h1.500M7.500 10h2M12 10h1M14 10h1.500M5 13.500h1.500M7.500 13.500h2M12 13.500h1M14 13.500h1.500" stroke="#c4c4c4" strokeWidth="1.700" /></Ic></div>
        <div className="ml-[17px] flex"><Ic><path d="M3 3h14v14.500H3z" fill="#d8d8d8" /><path d="M3 2.500h14v2.500H3z" fill="#777" /><path d="M4.500 7.500h8v3.500h-8zM8 12h8v3.500H8z" fill="#d8d8d8" stroke="#222" strokeWidth="1.600" /></Ic></div>
        <div className="ml-[3px] flex"><Ic><path d="M2 2h16v11l-5 5H2z" fill="#e8d84c" /><path d="M18 13l-5 5v-5z" fill="#a89420" /><path d="M5 6h11M5 9h10M5 12h6" stroke="#4c450e" strokeWidth="1.500" /></Ic></div>
        <div className="ml-[3px] flex"><Ic><path d="M2 2h15v14H2z" fill="#4a8ad0" stroke="#9cc0e0" strokeWidth=".6" /><path d="m2 16 5-7 3 3 3-5 4 4v5z" fill="#78b8a8" /><circle cx="6" cy="5.500" r="2" fill="#f2e050" /><circle cx="16" cy="16" r="3.500" fill="#1c1c1c" /><path d="M16 13v6M13 16h6" stroke="#fff" strokeWidth="1.600" /></Ic></div>
        <div className="ml-[5px] flex"><Ic><path d="m2 7 3-5h10l3 5z" fill="#c07820" /><path d="M5.500 3h9l1 2.500h-11z" fill="#7a4208" /><path d="M1 6h18v2.500H1z" fill="#e8a850" /><path d="M3 8.500h14V15H3z" fill="#d08828" /><path d="M8 8.500h4v2H8z" fill="#8a5010" /></Ic></div>
        <div className="ml-[17px] flex"><Mag /></div>
        <div className="ml-[3px] flex"><Ic><path d="M2 2h16v16H2z" fill="#e4e4e0" /><path d="M2.500 10.500c4-6 11-6 15 0-4 5-11 5-15 0z" fill="#fff" stroke="#222" strokeWidth="1.400" /><circle cx="10" cy="10" r="3.400" fill="#111" /><circle cx="11" cy="9" r="1" fill="#fff" /></Ic></div>
      </div>
      <div className="flex min-h-0 flex-1">
        <Network />
        <Params />
      </div>
    </div>
  );
}

/* ---------- playbar ---------- */

const BTN = "flex items-center justify-center border-r border-[#222] bg-gradient-to-b from-[#555] to-[#3a3a3a] ";

function Playbar() {
  const ticks: React.ReactNode[] = [];
  for (let i = 1; i <= 40; i++) {
    const x = 1.500 + i * 22;
    if (x > 880) break;
    const major = i % 4 === 0;
    ticks.push(<path key={i} d={`M${x - 5} ${major ? 13 : 15}V${major ? 25 : 22}`} stroke="#8c8c8c" />);
  }
  return (
    <div className="flex h-[58px] shrink-0 border-b border-t border-b-[#0c0c0c] border-t-[#6a6e6e] bg-[#2e2e2e]">
      <div className="flex w-[9px] shrink-0 items-end justify-center border-r border-[#1a1a1a] bg-gradient-to-r from-[#484848] to-[#363636] pb-px">
        <Ic c="h-[5px] w-[5px]" v="0 0 6 6"><path d="M3 6 5.500 1h-5z" fill="#050505" /></Ic>
      </div>
      <div className="flex w-[184px] shrink-0 flex-col pl-[3px] pt-[6px]">
        <div className="flex h-[23px]">
          <div className={BTN + "w-[23px]"}><Ic c="h-[12px] w-[18px]" v="0 0 18 12"><path d="M1 1h2.200v10H1zM10 1v10L4 6zM17 1v10l-6-5z" fill="#eee" /></Ic></div>
          <div className={BTN + "w-[23px]"}><Ic c="h-[12px] w-[12px]" v="0 0 12 12"><path d="M10 .5v11L2 6z" fill="#eee" /></Ic></div>
          <div className={"flex w-[22px] items-center justify-center " + SEL}><Ic c="h-[13px] w-[13px]" v="0 0 13 13"><path d="M1 .5h11v12H1z" fill="url(#metal)" stroke="#444" strokeWidth=".5" /></Ic></div>
          <div className={BTN + "w-[23px]"}><Ic c="h-[12px] w-[12px]" v="0 0 12 12"><path d="M2 .5v11L10.500 6z" fill="#eee" /></Ic></div>
          <div className={BTN + "w-[22px]"}><Ic c="h-[12px] w-[18px]" v="0 0 18 12"><path d="M14.800 1H17v10h-2.200zM1 1v10l6-5zM8 1v10l6-5z" fill="#eee" /></Ic></div>
          <div className={"ml-[3px] w-[37px] bg-[#101010] pl-[1px] leading-[23px] text-[#e0e0e0] " + MONO}>1</div>
          <div className={BTN + "ml-[2px] w-[12px]"}><Ic c="h-[10px] w-[9px]" v="0 0 9 10"><path d="M4.500 1.500v7L1 5z" fill="#ddd" /><path d="M6 1.500v7M8 2.500v5" stroke="#bbb" strokeWidth=".9" /></Ic></div>
          <div className={BTN + "w-[10px]"}><Ic c="h-[10px] w-[9px]" v="0 0 9 10"><path d="M4.500 1.500v7L8 5z" fill="#ddd" /><path d="M3 1.500v7M1 2.500v5" stroke="#bbb" strokeWidth=".9" /></Ic></div>
        </div>
        <div className="mt-[6px] flex h-[20px]">
          <div className={BTN + "w-[23px]"}><Ic><path d="M4 3h11v3H4z" fill="#888" /><path d="M4 6h11v10H4z" fill="#eee" /><path d="M10 7v10l2.500-2 1.500 3.500 2-1-1.500-3H18z" fill="#111" stroke="#ddd" strokeWidth=".8" /></Ic></div>
          <div className={BTN + "w-[22px]"}><Ic><path d="M3 8h2l4-4v12l-4-4H3z" fill="#899" stroke="#ddd" strokeWidth=".8" /><ellipse cx="12" cy="10" rx="3.800" ry="7.500" fill="#3d474d" stroke="#ddd" strokeWidth="1.200" /><ellipse cx="11" cy="10" rx="1.500" ry="3.500" fill="#9ab" /></Ic></div>
          <div className={BTN + "w-[23px]"}><Ic><path d="M5 7.500C8 2.500 17 4 16 14" stroke="#e4e4e4" strokeWidth="2.400" /><path d="M3 4v6h6.500z" fill="#e4e4e4" /><path d="M3 15h14M6 11.500h7" stroke="#e4e4e4" strokeWidth="1.800" /><Tri /></Ic></div>
          <div className={BTN + "w-[22px]"}><Ic><circle cx="10" cy="10" r="7.200" stroke="#d4d4d4" strokeWidth="1.400" /><circle cx="10" cy="10" r="4.800" fill="#dcdcdc" /><path d="M10 6.500V10h3M7 10h3v3" stroke="#333" strokeWidth="1.300" /></Ic></div>
          <div className="ml-[3px] flex w-[39px] items-center justify-around border border-[#242424] bg-[#363636]">
            <Ic c="h-[8px] w-[9px]" v="0 0 9 8"><path d="M1.500 0v8" stroke="#4d6a3a" strokeWidth="1.600" /><path d="M8.500.5v7L4 4z" fill="#5c5c5c" /></Ic>
            <Ic c="h-[8px] w-[9px]" v="0 0 9 8"><path d="M7.500 0v8" stroke="#4d6a3a" strokeWidth="1.600" /><path d="M.5.5v7L5 4z" fill="#5c5c5c" /></Ic>
          </div>
        </div>
      </div>
      <div className="flex w-[880px] shrink-0 flex-col">
        <svg className="h-[35px] w-[880px]" viewBox="0 0 880 35" fill="none">
          <path d="M0 18.500h880" stroke="#9c9c9c" />
          {ticks}
          {[24, 48, 72, 96, 120, 144, 168, 192, 216].map((n, i) => (
            <text key={n} x={84.5 + i * 88} y="8.700" fontSize="8.500" fill="#9a9a9a">{n}</text>
          ))}
          <text x="876.500" y="8.700" fontSize="8.500" fill="#9a9a9a">2</text>
          <path d="M.5 18.500V2h19.500v13H3.500z" fill="#0c0c0c" stroke="#dcdcdc" strokeWidth="1.200" />
          <text x="7.500" y="12.500" fontSize="10.500" fill="#eee">1</text>
        </svg>
        <div className={"flex h-[19px] items-center leading-[19px] text-[#e0e0e0] " + MONO}>
          <div className="h-full w-[36px] border border-[#2a2a2a] bg-[#1e1e1e] pl-[2px] leading-[17px]">1</div>
          <div className="ml-[2px] h-full w-[35px] bg-[#101010] pl-[1px]">1</div>
          <Ic c="h-[9px] w-[5px]" v="0 0 5 9"><path d="M0 0v9l5-4.500z" fill="#aaa" /></Ic>
          <div className="h-[3px] flex-1 bg-[#6b6e6e]" />
          <Ic c="h-[9px] w-[5px]" v="0 0 5 9"><path d="M5 0v9L0 4.500z" fill="#ccc" /></Ic>
          <div className="ml-[2px] h-full w-[34px] bg-[#101010] pl-[1px]">240</div>
          <div className="ml-[2px] h-full w-[35px] border border-[#2a2a2a] bg-[#1e1e1e] pl-[1px] leading-[17px]">240</div>
        </div>
      </div>
      <div className="flex w-[50px] shrink-0 items-center pl-[3px]">
        <div className="flex h-[32px] w-[32px] shrink-0 items-center justify-center rounded-full border border-[#222] bg-[#383838]">
          <Ic><circle cx="12.500" cy="7" r="3" stroke="#6c6c6c" strokeWidth="1.700" /><path d="m10.500 9.500-5 6M6.500 13l2.500 2" stroke="#6c6c6c" strokeWidth="1.700" /></Ic>
        </div>
        <div className="-mt-[4px] flex h-[18px] w-[14px] items-center justify-center border border-[#222] bg-[#363636]"><Down /></div>
      </div>
      <div className="flex w-[154px] shrink-0 flex-col gap-[4px] pl-[3px] pt-[6px] text-[8.900px] leading-[18px] text-[#d0d0d0]">
        <div className="flex h-[20px]">
          <div className="flex w-[20px] items-center justify-center border border-[#191919] bg-[#555]"><Ic c="h-[18px] w-[18px]"><path d="M2 3h9v14H2z" fill="#888" /><path d="M2 6h4v3H2z" fill="#c03030" /><path d="M2 10h4v3H2z" fill="#3a9a3a" /><path d="M2 14h4v3H2z" fill="#3050c0" /><path d="M8 10a4.500 4.500 0 0 1 8-2M17 11a4.500 4.500 0 0 1-8 2" stroke="#eee" strokeWidth="2" /><path d="M17 4v5h-5zM8 17v-5h5z" fill="#eee" /></Ic></div>
          <div className="ml-[3px] flex w-[128px] items-center border border-[#222] bg-gradient-to-b from-[#545454] to-[#404040]"><span className="flex-1 whitespace-nowrap pl-[13px]">0 keys, 0/0 channels</span><Ic c="mr-[4px] h-[8px] w-[8px]" v="0 0 8 8"><path d="M1.500 6.500h5L4 1z" fill="#8a8a8a" /></Ic></div>
        </div>
        <div className="flex h-[19px]">
          <div className="flex w-[20px] items-center justify-center border border-[#777] bg-[#0c0c0c]"><Ic c="h-[18px] w-[18px]"><path d="M2 10c3-8 5-2 7 2s5 5 9-6" stroke="#5a90d0" strokeWidth="1.600" /><path d="M2 13c4-8 7-5 9-3s4 4 7 1" stroke="#e8a030" strokeWidth="1.600" /><path d="M2 10.500h16" stroke="#888" strokeWidth=".6" /></Ic></div>
          <div className="ml-[3px] flex w-[127px] items-center border border-[#222] bg-gradient-to-b from-[#4c4c4c] to-[#3e3e3e]"><span className="flex-1 pl-[9px]">Key All Channels</span><div className="flex h-full w-[14px] items-center justify-center bg-[#323232]"><Spin /></div></div>
        </div>
      </div>
    </div>
  );
}

function StatusBar() {
  return (
    <div className="flex min-h-0 flex-1 justify-end bg-[#181818] pt-px">
      <div className="flex h-[23px] w-[143px] items-center bg-[#353535] text-[8.900px] leading-[20px] text-[#d0d0d0]">
        <div className="ml-[2px] flex"><Ic c="h-[20px] w-[22px]" v="0 0 22 20"><path d="M2 10c0-5 4-7.500 8-7 5 .3 8 3.500 8 7.500 0 2-1 3.500-2 4l1 3-3-2c-3 1-5 1-6-1-3 .5-6-1-6-4.500z" fill="#cfcfcb" /><path d="M5 9c2-3 4 1 6-2M7 12c2-2 4 1 7-2M9 5c1 2 3 0 4 2M12 13l3-1" stroke="#a8a8a4" strokeWidth="1" /><path d="M18 15v4l3-2z" fill="#999" /></Ic></div>
        <div className="ml-[4px] flex"><Ic><path d="M3.500 9a6.500 6.500 0 0 1 11.500-3M16.500 11a6.500 6.500 0 0 1-11.500 3" stroke="#6c6c6c" strokeWidth="1.800" /><path d="M17 2v6h-6zM3 18v-6h6z" fill="#6c6c6c" /></Ic></div>
        <div className="ml-[3px] flex h-full w-[75px] items-center justify-center border-l border-[#1e1e1e] bg-gradient-to-b from-[#4f4f4f] to-[#404040]">Auto Update</div>
        <div className="flex w-[16px] items-center justify-center"><Spin /></div>
      </div>
    </div>
  );
}

function Callouts() {
  return (
    <svg className="pointer-events-none absolute left-0 top-0 h-[678px] w-[1280px]" viewBox="0 0 1280 678">
      <path d="M894 215 969.500 207.200V205L980 210l-10.500 5v-2.700z" fill="#f00" />
      <path d="M593.500 420l6.800 10.500-3 .5L597.700 482 596.500 476 591.700 431l-3.200-.2z" fill="#f00" />
      <path d="M684 492 860 388.300 928.500 347.800 927.500 344.300 939 345 932.500 354.500 930.500 351.500 860 391.800z" fill="#f00" />
    </svg>
  );
}

export default function App() {
  return (
    <div className="relative flex h-[678px] w-[1280px] flex-col overflow-hidden bg-[#2e2e2e] font-['Noto_Sans_CJK_SC','Noto_Sans',sans-serif] [text-rendering:geometricPrecision]">
      <Defs />
      <TopBar />
      <div className="flex h-[8px] shrink-0 items-center border-b border-[#0e0e0e] bg-gradient-to-b from-[#505050] to-[#3c3c3c] pl-[2px]">
        <Ic c="h-[5px] w-[6px]" v="0 0 6 6"><path d="M3 6 5.500 1h-5z" fill="#050505" /></Ic>
      </div>
      <div className="flex h-[565px] shrink-0">
        <div className="w-[5px] shrink-0 border-l border-[#111] bg-[#484848]" />
        <ScenePane />
        <div className="w-[5px] shrink-0 border-l-2 border-r border-l-[#161616] border-r-[#252525] bg-[#4a4a4a]" />
        <NetworkPane />
      </div>
      <Playbar />
      <StatusBar />
      <Callouts />
    </div>
  );
}
